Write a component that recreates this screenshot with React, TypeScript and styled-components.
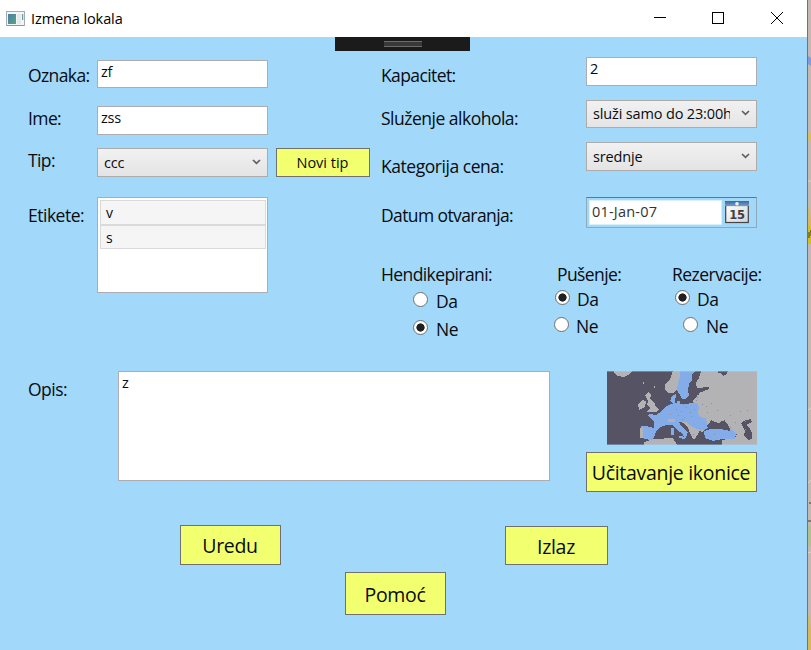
import React from "react";
import styled, { createGlobalStyle } from "styled-components";

const Global = createGlobalStyle`
  * { box-sizing: border-box; }
  html, body { margin: 0; padding: 0; }
  body {
    width: 811px; height: 650px; overflow: hidden;
    font-family: "Open Sans", "Noto Sans", sans-serif;
    color: #080c10; background: #a2d8fa;
  }
`;

const Desktop = styled.div`
  display: flex;
  width: 811px;
  height: 650px;
  overflow: hidden;
`;

const Window = styled.main`
  display: flex;
  flex-direction: column;
  width: 808px;
  height: 650px;
  border-right: 1px solid #2387d4;
  background: #a2d8fa;
`;

const TitleBar = styled.header`
  display: flex;
  align-items: center;
  height: 37px;
  flex: none;
  padding: 0 1px 0 6px;
  background: #fff;
`;

const Title = styled.h1`
  flex: 1;
  margin: 0 0 0 6px;
  font-size: 14.5px;
  line-height: 20px;
  font-weight: 400;
  letter-spacing: -0.1px;
  color: #000;
`;

const WindowButton = styled.button`
  display: flex;
  align-items: center;
  justify-content: center;
  width: 58.5px;
  height: 37px;
  padding: 0 0 1px;
  border: 0;
  background: none;
`;

const Body = styled.section`
  position: relative;
  flex: 1;
`;

const Grip = styled.div`
  position: absolute;
  left: 335px;
  top: 0;
  display: flex;
  justify-content: center;
  width: 135px;
  height: 14px;
  padding-top: 4px;
  background: #1b1b1b;

  &::after {
    content: "";
    width: 38px;
    height: 4px;
    border: solid #6c6c6c;
    border-width: 1px 0;
    background: #383838;
  }
`;

const Columns = styled.div`
  display: flex;
  height: 334px;
  padding-left: 28px;
`;

const Column = styled.div<{ $w: number; $top: number }>`
  display: flex;
  flex-direction: column;
  flex: none;
  width: ${(p) => p.$w}px;
  padding-top: ${(p) => p.$top}px;
`;

const Row = styled.div<{ $h: number; $gap?: number; $label: number }>`
  display: grid;
  grid-template-columns: ${(p) => p.$label}px 171px auto;
  grid-template-rows: ${(p) => p.$h}px;
  height: ${(p) => p.$h}px;
  margin-bottom: ${(p) => p.$gap ?? 0}px;
`;

const Label = styled.label<{ $dy?: number; $track?: number }>`
  display: block;
  height: 24px;
  margin-top: ${(p) => p.$dy ?? 0}px;
  font-size: 17.5px;
  line-height: 22px;
  letter-spacing: ${(p) => p.$track ?? -0.6}px;
  white-space: nowrap;
`;

const TextField = styled.div<{ $w?: number }>`
  width: ${(p) => p.$w ?? 171}px;
  height: 100%;
  padding: 1px 3px;
  border: 1px solid #abadb3;
  background: #fff;
  font-size: 14.5px;
  line-height: 20px;
  letter-spacing: -0.2px;
`;

const Combo = styled.div`
  display: flex;
  align-items: center;
  height: 100%;
  padding: 0 6px;
  border: 1px solid #acacac;
  background: linear-gradient(#f1f1f1, #e4e4e4);
  font-size: 14.5px;
  line-height: 20px;
`;

const ComboText = styled.span`
  width: 137px;
  overflow: hidden;
  white-space: nowrap;
  letter-spacing: -0.15px;
`;

const Chevron = styled.svg`
  flex: none;
  margin: -2px 0 0 11px;
`;

const Button = styled.button<{ $w: number; $h: number; $size?: number; $track?: number }>`
  display: flex;
  align-items: center;
  justify-content: center;
  flex: none;
  width: ${(p) => p.$w}px;
  height: ${(p) => p.$h}px;
  padding: 2px 1px 0 0;
  border: 1px solid #707070;
  background: #f2ff6e;
  color: #080c10;
  font-family: inherit;
  font-size: ${(p) => p.$size ?? 19.5}px;
  letter-spacing: ${(p) => p.$track ?? -0.3}px;
  line-height: 1.3;
  white-space: nowrap;
`;

const NewType = styled.div`
  padding-left: 8px;
`;

const List = styled.ul`
  height: 96px;
  margin: 0;
  padding: 2px 1px 0 2px;
  border: 1px solid #abadb3;
  background: #fff;
  list-style: none;
`;

const ListItem = styled.li`
  height: 25px;
  padding: 2px 5px 0;
  border: 1px solid #dadada;
  background: #f5f5f5;
  font-size: 14px;
  line-height: 20px;

  & + & { height: 24px; }
`;

const DatePicker = styled.div`
  display: flex;
  height: 31px;
  padding: 2px 0 0 2px;
  border: 1px solid #8fa9ba;
  border-top-color: #61798a;
`;

const DateText = styled.div`
  width: 133px;
  height: 25px;
  padding: 1px 2px;
  border: 1px solid #d8effc;
  background: #fff;
  color: #333;
  font-size: 14.5px;
  line-height: 19px;
  letter-spacing: 0.2px;
`;

const CalendarIcon = styled.svg`
  margin: 0 0 0 3px;
`;

const Groups = styled.div`
  display: grid;
  grid-template-columns: 176px 115px auto;
  margin-top: 35px;
`;

const Group = styled.fieldset`
  min-width: 0;
  margin: 0;
  padding: 0;
  border: 0;
`;

const Choice = styled.div<{ $indent: number; $gap: number }>`
  display: flex;
  margin: ${(p) => p.$gap}px 0 0 ${(p) => p.$indent}px;
  height: 24px;
`;

const Circle = styled.span<{ $on?: boolean }>`
  width: 15px;
  height: 15px;
  margin: 3px 8px 0 0;
  border: 1px solid #707070;
  border-radius: 50%;
  background: ${(p) => (p.$on ? "radial-gradient(circle, #212121 0 3.8px, #fff 4.4px)" : "#fff")};
`;

const ChoiceText = styled.span<{ $dx: number }>`
  margin-left: ${(p) => p.$dx}px;
  font-size: 17.5px;
  line-height: 24px;
  letter-spacing: -0.5px;
`;

const Description = styled.div`
  display: grid;
  grid-template-columns: 90px 432px 207px;
  height: 121px;
  padding-left: 28px;
`;

const DescriptionBox = styled.div`
  height: 110px;
`;

const IconPanel = styled.div`
  display: flex;
  flex-direction: column;
  align-items: flex-end;
  gap: 7px;
  margin-left: 36px;
  width: 171px;
`;

const Actions = styled.footer`
  display: grid;
  grid-template-columns: 165px 160px 103px;
  padding: 33px 0 0 180px;
`;

const ActionSlot = styled.div<{ $top: number }>`
  padding-top: ${(p) => p.$top}px;
`;

const MapStrip = styled.svg`
  flex: none;
`;

const Arrow = () => (
  <Chevron width="9" height="6" viewBox="0 0 9 6">
    <path d="M1 1 4.5 4.4 8 1" fill="none" stroke="#606060" strokeWidth="1.7" />
  </Chevron>
);

const AppIcon = () => (
  <svg width="19" height="16" viewBox="0 0 19 16">
    <defs>
      <linearGradient id="app" x1="0" y1="0" x2="1" y2="1">
        <stop offset="0" stopColor="#4c7da4" />
        <stop offset="1" stopColor="#55a684" />
      </linearGradient>
    </defs>
    <rect x=".5" y=".5" width="18" height="14" fill="#f4f5f6" stroke="#a5abb0" />
    <rect x="2" y="3" width="8" height="10" fill="url(#app)" />
    <rect x="11" y="3" width="4" height="10" fill="#e6e8ea" />
    <rect x="16" y="3" width="1.2" height="6" fill="#5b9fa0" />
    <path d="M1 14.5h17" stroke="#8f969b" />
  </svg>
);

const Calendar = () => (
  <CalendarIcon width="24" height="25" viewBox="0 0 24 25">
    <defs>
      <linearGradient id="cal" x1="0" y1="0" x2="0" y2="1">
        <stop offset="0" stopColor="#3d6995" />
        <stop offset="1" stopColor="#6fa0d0" />
      </linearGradient>
      <linearGradient id="page" x1="0" y1="0" x2="1" y2="1">
        <stop offset="0" stopColor="#fff" />
        <stop offset="1" stopColor="#cfd3da" />
      </linearGradient>
    </defs>
    <rect x=".7" y="5.5" width="22.6" height="17" fill="url(#page)" stroke="#444" strokeWidth="1.2" />
    <rect x="0" y="1" width="24" height="5" fill="url(#cal)" />
    <circle cx="12" cy="3.8" r="1.8" fill="#eaf6ff" />
    <text x="12" y="19" textAnchor="middle" fontFamily="DejaVu Sans" fontWeight="700" fontSize="11.5" fill="#404040" letterSpacing="-.2">15</text>
  </CalendarIcon>
);

const EuropeMap = () => (
  <svg width="150" height="74" viewBox="0 0 150 74" shapeRendering="crispEdges">
    <rect width="150" height="74" fill="#555364" />
    <g fill="#b3b3b5">
      <path d="M7 0H25L23 3 17 6 11 5 8 3Z" />
      <path d="M66 0H78L74 6 72 11V17L66 22 61 22 58 18V13L63 9Z" />
      <path d="M94 0H150V74H115V69L128 67 130 63 124 60 121 54 117 50 111 52 105 50 100 54 96 61 91 60 86 30 90 25 92 22 102 18 102 16 90 17 89 12 92 7Z" />
      <path d="M38 24 41 21 44 24 43 28 47 31 49 36 52 38 49 41 39 41 43 37 40 34 41 30Z" />
      <path d="M31 33 35 29 39 30 38 36 32 39Z" />
      <path d="M33 57H37V67H33ZM37 71 47 68 66 67 70 74H37Z" />
      <path d="M72 49 80 50 88 57 93 59 91 63 87 69 84 64 80 55Z" />
      <path d="M36 11h1v2h-1zM47 15h1v2h-1zM39 23h1v3h-1z" />
    </g>
    <g fill="#84ace8">
      <path d="M73 0H88L85 4V9L82 13 81 20 82 24 78 28H75L73 24 70 19 71 12 73 6Z" />
      <path d="M65 25 69 23 68 31 66 33 63 30ZM70 30h3v3h-3z" />
      <path d="M62 34 67 32 73 33 90 32 92 36 91 42 93 46 99 47 100 53 101 58 94 59 90 58 84 55 79 51 72 51 75 56 81 61 80 64 77 67 76 63 70 59 65 54 59 54 53 56 49 61 47 67 44 69 37 68 36 64 34 57V55L39 55 47 57 47 51 43 46 40 45 43 43 49 44 55 40 59 35Z" />
      <path d="M97 60 104 58 114 58 126 59 129 63 128 68 115 68 106 70 98 67Z" />
      <path d="M64 57h3v7h-3zM72 65 79 66 78 68 72 67Z" />
    </g>
    <path d="M61 48H68V51H61ZM33 57H36V67H33Z" fill="#b3b3b5" />
    <g fill="#555364">
      <path d="M111 0H121L120 3 116 5 114 2 111 2ZM100 58 102 53 104 49 108 51 112 52 115 50 118 49 117 53 122 56 123 60 113 58 103 58Z" />
      <path d="M134 52 139 49 144 48 145 51 139 54 143 58 145 62V68L141 69 137 65 138 60Z" />
      <path d="M89 19h3v5h-3zM92 17h4v2h-4z" />
    </g>
    <path d="M69 38h1m4 2h1m4-4h1m3 5h1m3-3h1m-17 6h1m5 2h1m6-1h1m-22-2h1m11 5h1m13-19h1m5 4h1m-6-7h1m8 9h1m4-3h1m5 7h1m12 5h1m9-4h1m6-1h1m-13 12h1m-6 5h1m14-6h1m-1 8h1m-32 5h1m-22 0h1m13-22h1m-25-8h1m9-2h1" stroke="#8790a0" strokeWidth="1" />
    <path d="M0 .5h150M0 73.5h150" stroke="#a2d8fa" opacity=".38" />
  </svg>
);

type ChoiceSpec = { text: string; on: boolean; indent: number; gap: number; dx: number };

function RadioGroup({ title, track, choices }: { title: string; track?: number; choices: ChoiceSpec[] }) {
  return (
    <Group>
      <Label $track={track}>{title}</Label>
      {choices.map((c) => (
        <Choice key={c.text} $indent={c.indent} $gap={c.gap}>
          <Circle $on={c.on} />
          <ChoiceText $dx={c.dx}>{c.text}</ChoiceText>
        </Choice>
      ))}
    </Group>
  );
}

export default function App() {
  return (
    <Desktop>
      <Global />
      <Window>
        <TitleBar>
          <AppIcon />
          <Title>Izmena lokala</Title>
          <WindowButton aria-label="Minimize">
            <svg width="12" height="12"><path d="M0 5.5h12" stroke="#000" /></svg>
          </WindowButton>
          <WindowButton aria-label="Maximize">
            <svg width="12" height="12"><rect x=".5" y=".5" width="11" height="11" fill="none" stroke="#000" /></svg>
          </WindowButton>
          <WindowButton aria-label="Close">
            <svg width="12" height="12"><path d="M0 0 12 12M12 0 0 12" stroke="#000" /></svg>
          </WindowButton>
        </TitleBar>
        <Body>
          <Grip />
          <Columns>
            <Column $w={353} $top={23}>
              <Row $label={69} $h={28} $gap={18}><Label $dy={4}>Oznaka:</Label><TextField>zf</TextField></Row>
              <Row $label={69} $h={29} $gap={13}><Label $dy={1}>Ime:</Label><TextField>zss</TextField></Row>
              <Row $label={69} $h={29} $gap={20}>
                <Label $dy={1}>Tip:</Label>
                <Combo><ComboText>ccc</ComboText><Arrow /></Combo>
                <NewType><Button $w={94} $h={29} $size={14.5} $track={0}>Novi tip</Button></NewType>
              </Row>
              <Row $label={69} $h={96}>
                <Label $dy={7} $track={-0.5}>Etikete:</Label>
                <List><ListItem>v</ListItem><ListItem>s</ListItem></List>
              </Row>
            </Column>
            <Column $w={426} $top={20}>
              <Row $label={205} $h={29} $gap={14}><Label $dy={7}>Kapacitet:</Label><TextField>2</TextField></Row>
              <Row $label={205} $h={28} $gap={14}>
                <Label $dy={7} $track={-0.5}>Služenje alkohola:</Label>
                <Combo><ComboText>služi samo do 23:00h</ComboText><Arrow /></Combo>
              </Row>
              <Row $label={205} $h={29} $gap={26}>
                <Label $dy={13} $track={-0.46}>Kategorija cena:</Label>
                <Combo><ComboText>srednje</ComboText><Arrow /></Combo>
              </Row>
              <Row $label={205} $h={31}>
                <Label $dy={7} $track={-0.6}>Datum otvaranja:</Label>
                <DatePicker><DateText>01-Jan-07</DateText><Calendar /></DatePicker>
              </Row>
              <Groups>
                <RadioGroup title="Hendikepirani:" choices={[
                  { text: "Da", on: false, indent: 32, gap: 2, dx: 0 },
                  { text: "Ne", on: true, indent: 32, gap: 4, dx: 0 },
                ]} />
                <RadioGroup title="Pušenje:" choices={[
                  { text: "Da", on: true, indent: -2, gap: 0, dx: -1 },
                  { text: "Ne", on: false, indent: -3, gap: 3, dx: -1 },
                ]} />
                <RadioGroup title="Rezervacije:" track={-0.53} choices={[
                  { text: "Da", on: true, indent: 3, gap: 0, dx: -1 },
                  { text: "Ne", on: false, indent: 11, gap: 3, dx: 0 },
                ]} />
              </Groups>
            </Column>
          </Columns>
          <Description>
            <Label $dy={7} $track={-0.5}>Opis:</Label>
            <DescriptionBox><TextField $w={432}>z</TextField></DescriptionBox>
            <IconPanel>
              <EuropeMap />
              <Button $w={171} $h={40} $track={-0.3}>Učitavanje ikonice</Button>
            </IconPanel>
          </Description>
          <Actions>
            <ActionSlot $top={0}><Button $w={101} $h={40}>Uredu</Button></ActionSlot>
            <ActionSlot $top={47}><Button $w={101} $h={43}>Pomoć</Button></ActionSlot>
            <ActionSlot $top={1}><Button $w={103} $h={39}>Izlaz</Button></ActionSlot>
          </Actions>
        </Body>
      </Window>
      <MapStrip width="3" height="650" viewBox="0 0 3 650">
        <rect width="3" height="650" fill="#c4b8b2" />
        <path d="M0 46 3 48V56L0 54Z" fill="#7f9bd8" transform="translate(0 10)" />
        <path d="M0 134 3 132V140L0 142Z" fill="#dbbd5c" />
        <path d="M0 204 3 220V226H0ZM0 612 3 630V650H0Z" fill="#d9b75d" />
        <rect y="226" width="3" height="18" fill="#d7bd20" />
        <path d="M1 232v6M2 231h1v5M1 503h2M0 521h3" fill="none" stroke="#3c3830" />
        <rect y="526" width="3" height="20" fill="#b3bf8e" />
        <path d="M0 181h3M0 410l3-2M0 483l3-3M0 553l3-1" stroke="#dcd5d1" />
      </MapStrip>
    </Desktop>
  );
}
